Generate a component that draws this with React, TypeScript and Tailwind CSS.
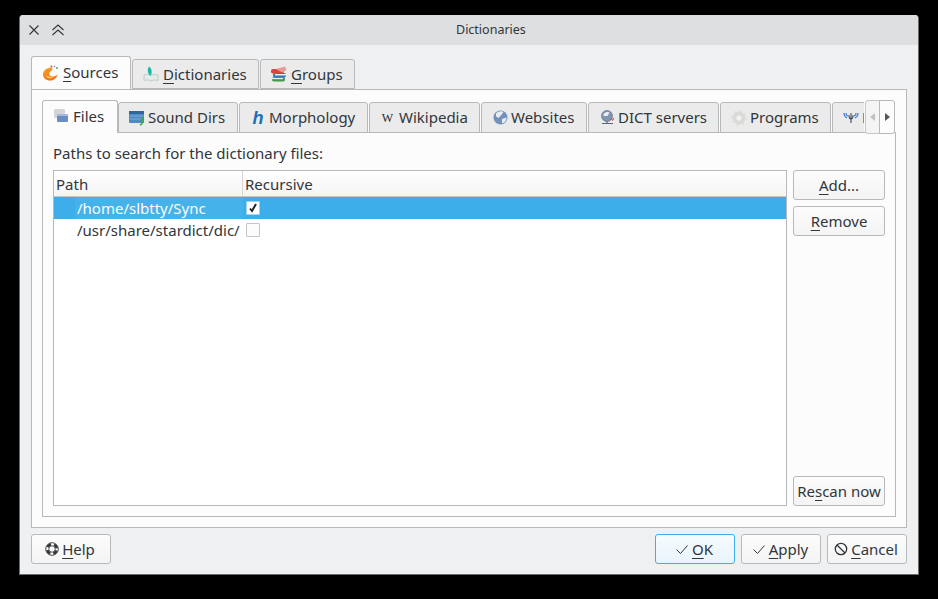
import type { ReactNode } from "react";

const Ul = ({ children }: { children: ReactNode }) => (
    <span className="underline decoration-1 underline-offset-[3px]">{children}</span>
);

const SourcesIcon = () => (
    <svg width="16" height="16" viewBox="0 0 16 16">
        <defs>
            <linearGradient id="flame" x1="0" y1="0" x2="0.6" y2="1">
                <stop offset="0" stopColor="#f6a623" />
                <stop offset="1" stopColor="#f2701d" />
            </linearGradient>
        </defs>
        <path d="M9 2.500C4.500 2.500 0 5 0 9.500 0 13 3 15.500 7 15.500c3.500 0 6.500-2 7.500-6-2 2-5 2.500-7 1.500C5.500 10 6 6.500 9.500 5z" fill="url(#flame)" />
        <path d="M3 11c2 3 6 3 8.500 0-2 1-5 1.500-6.500 0z" fill="#fbd25a" />
        <circle cx="8.500" cy="1.500" r="1" fill="#e2574c" />
        <circle cx="11.500" cy="1.500" r=".8" fill="#9a7fd0" />
        <circle cx="14" cy="3" r=".9" fill="#3aa655" />
    </svg>
);

const BookIcon = () => (
    <svg width="16" height="16" viewBox="0 0 16 16">
        <path d="M1 9c2-.8 5-.8 7 .5 2-1.300 5-1.300 7-.5v5.500c-2-.8-5-.8-7 .5-2-1.300-5-1.300-7-.5z" fill="#e4ecea" stroke="#aebdb9" strokeWidth=".7" />
        <path d="M7.500 10C4.500 7.500 4 3.500 6 .5c3 2 3.500 6.500 1.500 9.500z" fill="#18b9a8" />
    </svg>
);

const BooksIcon = () => (
    <svg width="16" height="16" viewBox="0 0 16 16">
        <rect x="1" y="11" width="13" height="4.500" rx="1.800" fill="#3f9a49" />
        <rect x="1" y="11.800" width="11" height="1.400" fill="#e8eef0" />
        <rect x="2" y="7" width="13" height="4.500" rx="1.800" fill="#3a74b7" />
        <rect x="4" y="8" width="11" height="1.500" fill="#e8eef0" />
        <rect x="0" y="3" width="13" height="4.500" rx="1.800" fill="#d9443f" />
        <path d="M5 3l9-2.500 1.500 3.500L11 6.500z" fill="#e79a96" />
    </svg>
);

const FilesIcon = () => (
    <svg width="15" height="14" viewBox="0 0 15 14">
        <rect x="0" y="0" width="11" height="9" rx="1.500" fill="#d3d5d8" />
        <rect x="3" y="5" width="11" height="8" rx="1" fill="#6b8dc2" />
        <rect x="3" y="5" width="11" height="2" fill="#a4bbdb" />
    </svg>
);

const SoundIcon = () => (
    <svg width="16" height="16" viewBox="0 0 16 16">
        <rect x="0" y="1" width="15" height="12" rx="1" fill="#4f8ac3" />
        <rect x="0" y="1" width="15" height="3" fill="#2c689f" />
        <path d="M1 6h13M1 9h13" stroke="#8fb8dc" strokeWidth=".7" />
        <path d="M13 7v7M11 15l2-1M15 9l-2 1M15 11.500l-2 1" stroke="#39a845" strokeWidth="1.400" fill="none" />
    </svg>
);

const GlobeIcon = () => (
    <svg width="15" height="15" viewBox="0 0 15 15">
        <circle cx="7.500" cy="7.500" r="7" fill="#7391bd" />
        <path d="M3 3.500c2-2.500 6-3 7.500-1.500L8 5.500 5.500 8 3 6.500zM9 9l4.500-1.500c0 3.500-2.500 6-4.500 5.500z" fill="#e6ebf2" />
    </svg>
);

const ServerIcon = () => (
    <svg width="15" height="15" viewBox="0 0 15 15">
        <circle cx="7" cy="6" r="5.500" fill="#8396b3" stroke="#55657e" strokeWidth=".6" />
        <path d="M3.500 4c2-2.500 5-2.500 6-1.500L7.500 6h-4z" fill="#e9edf3" />
        <path d="M2 13.500h11M7 11.500v2" stroke="#5b6675" strokeWidth="1.200" />
        <path d="M11 8l1.500 2.500L14 8" stroke="#d93a3a" fill="none" />
    </svg>
);

const GearIcon = () => (
    <svg width="16" height="16" viewBox="0 0 16 16">
        <circle cx="8" cy="8" r="4.500" fill="none" stroke="#dadad8" strokeWidth="4" />
        <circle cx="8" cy="8" r="7" fill="none" stroke="#e0e0de" strokeWidth="2" strokeDasharray="2.500 3" />
        <circle cx="8" cy="8" r="2.500" fill="#f2f2f0" />
    </svg>
);

const ForvoIcon = () => (
    <svg width="16" height="12" viewBox="0 0 16 12">
        <path d="M1 1c0 3 1 4 3 5M3 1c0 2 1 3 2 3M15 1c0 3-1 4-3 5M13 1c0 2-1 3-2 3" stroke="#3f7fd0" strokeWidth="1.200" fill="none" />
        <path d="M6 3c0 3 1 4 2 4s2-1 2-4M8 1v10" stroke="#3c4858" strokeWidth="1.100" fill="none" />
    </svg>
);

const Check = () => (
    <svg width="14" height="14" viewBox="0 0 14 14" fill="none" stroke="#31363b" strokeWidth="1">
        <path d="M1.500 7.500l4 4L12.500 3.500" />
    </svg>
);

const Cancel = () => (
    <svg width="14" height="14" viewBox="0 0 14 14" fill="none" stroke="#31363b" strokeWidth="1.300">
        <circle cx="7" cy="7" r="5.700" />
        <path d="M3 3l8 8" />
    </svg>
);

const Lifebuoy = () => (
    <svg width="14" height="14" viewBox="0 0 14 14">
        <circle cx="7" cy="7" r="4.800" fill="none" stroke="#31363b" strokeWidth="2.600" strokeDasharray="4.400 3.140" strokeDashoffset="-1.570" />
        <circle cx="7" cy="7" r="6.300" fill="none" stroke="#31363b" strokeWidth=".9" />
        <circle cx="7" cy="7" r="3.200" fill="none" stroke="#31363b" strokeWidth=".8" />
    </svg>
);

function Button({ children, className = "" }: { children: ReactNode; className?: string }) {
    return (
        <button className={`flex h-[30px] w-[80px] items-center justify-center gap-[3px] rounded-[3px] border bg-gradient-to-b ${className}`}>
            {children}
        </button>
    );
}

const plain = "border-[#b8b9ba] from-[#fcfcfc] to-[#f4f4f5]";

function OuterTab({ icon, children, active, className = "" }: { icon: ReactNode; children: ReactNode; active?: boolean; className?: string }) {
    return (
        <div
            className={`flex items-center gap-[4px] rounded-t-[3px] border border-[#b8b9ba] ${
                active ? "-mb-px h-[33px] border-b-0 bg-[#fcfcfc] pb-px pl-[11px]" : "mt-[3px] h-[30px] bg-[#ebebec] pl-[10px]"
            } ${className}`}
        >
            {icon}
            <span>{children}</span>
        </div>
    );
}

function InnerTab({ icon, label, width }: { icon: ReactNode; label: string; width: string }) {
    return (
        <div className={`mt-[2px] flex h-[31px] shrink-0 items-center gap-[3px] rounded-t-[3px] border border-[#b8b9ba] bg-[#ebebec] pl-[10px] ${width}`}>
            <span className="flex w-[16px] justify-center">{icon}</span>
            <span>{label}</span>
        </div>
    );
}

export default function App() {
    return (
        <div className="h-[599px] w-[938px] overflow-hidden bg-black pl-[19px] pt-[15px] font-['Noto_Sans',sans-serif] text-[15px] leading-none text-[#31363b]">
            <div className="flex h-[560px] w-[900px] flex-col overflow-hidden rounded-t-[4px] border-x border-b border-[#6b6c6e] bg-[#eff0f1]">
                <div className="flex h-[30px] shrink-0 items-center bg-[#dedfe0] pl-[8px] text-[12.500px]">
                    <svg width="12" height="12" viewBox="0 0 12 12" fill="none" stroke="#31363b" strokeWidth="1.100">
                        <path d="M1.500 1.500l9 9M10.500 1.500l-9 9" />
                    </svg>
                    <svg className="ml-[11px]" width="14" height="12" viewBox="0 0 14 12" fill="none" stroke="#31363b" strokeWidth="1.100">
                        <path d="M1.500 6l5.500-5 5.500 5M1.500 11l5.500-5 5.500 5" />
                    </svg>
                    <span className="ml-[391px]">Dictionaries</span>
                </div>

                <div className="flex flex-1 flex-col px-[11px] pt-[11px]">
                    <div className="flex gap-px">
                        <OuterTab icon={<SourcesIcon />} active className="z-10 w-[100px]">
                            <Ul>S</Ul>ources
                        </OuterTab>
                        <OuterTab icon={<BookIcon />} className="w-[127px]">
                            <Ul>D</Ul>ictionaries
                        </OuterTab>
                        <OuterTab icon={<BooksIcon />} className="w-[95px]">
                            <Ul>G</Ul>roups
                        </OuterTab>
                    </div>

                    <div className="h-[439px] border border-[#b8b9ba] bg-[#fcfcfc] px-[10px] pt-[10px]">
                        <div className="flex h-[32px] items-start">
                            <div className="z-10 flex h-[33px] w-[76px] shrink-0 items-center gap-[4px] rounded-t-[3px] border border-b-0 border-[#b8b9ba] bg-[#fcfcfc] pb-[2px] pl-[10px]">
                                <span className="flex w-[16px] justify-center"><FilesIcon /></span>
                                <span>Files</span>
                            </div>
                            <div className="flex min-w-0 flex-1 gap-px overflow-hidden">
                                <InnerTab icon={<SoundIcon />} label="Sound Dirs" width="w-[120px]" />
                                <InnerTab icon={<span className="font-['Liberation_Sans',sans-serif] text-[18px] font-bold italic text-[#1b6fb5]">h</span>} label="Morphology" width="w-[129px]" />
                                <InnerTab icon={<span className="pr-px font-['Liberation_Serif',serif] text-[12px] text-[#232629]">W</span>} label="Wikipedia" width="w-[111px]" />
                                <InnerTab icon={<GlobeIcon />} label="Websites" width="w-[106px]" />
                                <InnerTab icon={<ServerIcon />} label="DICT servers" width="w-[131px]" />
                                <InnerTab icon={<GearIcon />} label="Programs" width="w-[111px]" />
                                <InnerTab icon={<ForvoIcon />} label="Forvo" width="w-[80px]" />
                            </div>
                            <div className="z-10 ml-px mr-px flex h-[34px] w-[30px] shrink-0">
                                <div className="flex w-[15px] items-center justify-center rounded-l-[3px] border border-[#c4c5c6] bg-[#f4f4f5]">
                                    <span className="h-0 w-0 border-y-[4px] border-r-[5px] border-y-transparent border-r-[#c0c1c2]" />
                                </div>
                                <div className="-ml-px flex w-[16px] items-center justify-center rounded-r-[3px] border border-[#b8b9ba] bg-[#fcfcfc]">
                                    <span className="h-0 w-0 border-y-[4px] border-l-[5px] border-y-transparent border-l-[#55585b]" />
                                </div>
                            </div>
                        </div>

                        <div className="h-[385px] border border-[#b8b9ba] px-[10px] pt-[10px]">
                            <p className="h-[27px] pt-[2px] leading-[16px]">Paths to search for the dictionary files:</p>
                            <div className="flex gap-[6px]">
                                <div className="h-[336px] w-[734px] border border-[#b8b9ba] bg-white">
                                    <div className="flex h-[26px] border-b border-[#c4c5c6] bg-gradient-to-b from-white to-[#f4f4f5]">
                                        <div className="flex w-[189px] items-center border-r border-[#d5d6d7] pl-[2px] pt-px">Path</div>
                                        <div className="flex items-center pl-[2px] pt-px">Recursive</div>
                                    </div>
                                    <div className="flex h-[22px] items-center bg-[#3daee9] text-[#fcfcfc]">
                                        <div className="ml-[21px] flex h-full w-[168px] items-center bg-[#46b2ea] pl-[2px]">/home/slbtty/Sync</div>
                                        <div className="ml-[3px] flex h-[14px] w-[14px] items-center justify-center rounded-[1px] border border-[#9fd3ef] bg-white">
                                            <svg width="10" height="10" viewBox="0 0 10 10" fill="none" stroke="#232629" strokeWidth="2">
                                                <path d="M2 5.500l2 2.500 4-7" />
                                            </svg>
                                        </div>
                                    </div>
                                    <div className="flex h-[22px] items-center">
                                        <div className="w-[189px] pl-[23px]">/usr/share/stardict/dic/</div>
                                        <div className="ml-[3px] h-[14px] w-[14px] rounded-[1px] border border-[#c4c5c6] bg-[#fcfcfc]" />
                                    </div>
                                </div>
                                <div className="flex h-[336px] w-[92px] flex-col gap-[6px]">
                                    <Button className={`w-full ${plain}`}><span><Ul>A</Ul>dd...</span></Button>
                                    <Button className={`w-full ${plain}`}><span><Ul>R</Ul>emove</span></Button>
                                    <Button className={`mt-auto w-full ${plain}`}><span>Re<Ul>s</Ul>can now</span></Button>
                                </div>
                            </div>
                        </div>
                    </div>

                    <div className="mt-[6px] flex gap-[6px]">
                        <Button className={`mr-auto pr-[2px] ${plain}`}><Lifebuoy /><span><Ul>H</Ul>elp</span></Button>
                        <Button className="border-[#3daee9] from-[#f6fbfe] to-[#e9f4fb] pr-[2px]"><Check /><span><Ul>O</Ul>K</span></Button>
                        <Button className={`pr-[2px] ${plain}`}><Check /><span><Ul>A</Ul>pply</span></Button>
                        <Button className={`pr-[2px] ${plain}`}><Cancel /><span><Ul>C</Ul>ancel</span></Button>
                    </div>
                </div>
            </div>
        </div>
    );
}
